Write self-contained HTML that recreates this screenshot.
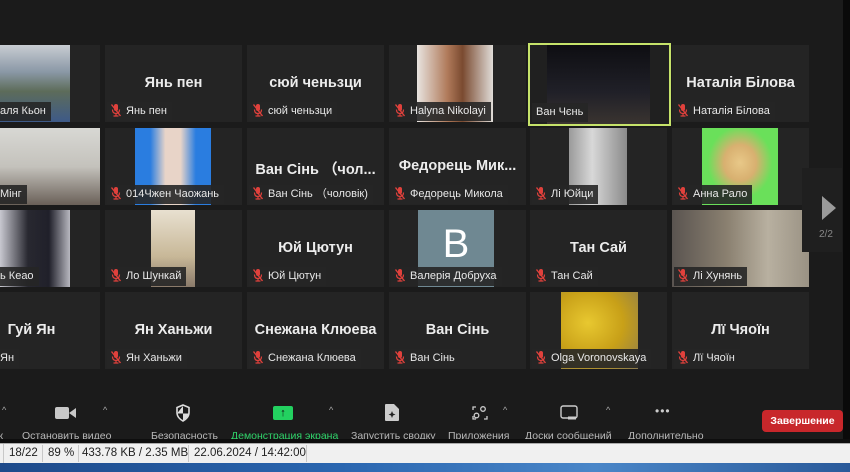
<!DOCTYPE html>
<html><head><meta charset="utf-8"><style>
*{margin:0;padding:0;box-sizing:border-box}
body{width:850px;height:472px;overflow:hidden;background:#1b1b1b;font-family:"Liberation Sans","DejaVu Sans",sans-serif;position:relative}
.t{position:absolute;width:137px;height:77px;background:#242424;overflow:hidden}
.ph{position:absolute;top:0;height:77px}
.nm{position:absolute;left:0;right:0;top:30px;text-align:center;color:#ececec;font-weight:bold;font-size:14.5px;white-space:nowrap}
.lb{position:absolute;left:2px;bottom:1px;height:19px;background:rgba(38,38,38,.9);color:#e8e8e8;font-size:11px;line-height:19px;padding:0 5px 0 3px;white-space:nowrap}
.lb svg{vertical-align:-3px;margin-right:4px}
.tb{position:absolute;color:#b8b8b8;font-size:10.5px;top:430px;white-space:nowrap}
.car{position:absolute;color:#aaa;font-size:9px;top:405px}
</style></head><body>
<svg width="0" height="0" style="position:absolute"><defs><symbol id="m" viewBox="0 0 12 14"><rect x="4" y="1" width="4" height="7" rx="2" fill="#e0413c"/><path d="M2.5 6.5q0 4 3.5 4t3.5-4M6 10.5v2.5M3.5 13h5" stroke="#e0413c" fill="none" stroke-width="1.2"/><path d="M1.5 1.5L10.5 13" stroke="#e0413c" stroke-width="1.4"/></symbol></defs></svg>

<!-- row 0 -->
<div class="t" style="left:-37px;top:45px"><div class="ph" style="left:37px;width:70px;background:linear-gradient(#c8ccd2 0,#8a98a6 35%,#5d6c5a 60%,#3e5a88 100%)"></div><div class="lb" style="left:37px;padding-left:0">аля Кьон</div></div>
<div class="t" style="left:105px;top:45px"><div class="nm">Янь пен</div><div class="lb"><svg width="12" height="14"><use href="#m"/></svg>Янь пен</div></div>
<div class="t" style="left:247px;top:45px"><div class="nm">сюй ченьзци</div><div class="lb"><svg width="12" height="14"><use href="#m"/></svg>сюй ченьзци</div></div>
<div class="t" style="left:389px;top:45px"><div class="ph" style="left:28px;width:76px;background:linear-gradient(90deg,#e8e4e0,#b07a5a 40%,#7a4a30 60%,#e0dcd8)"></div><div class="lb"><svg width="12" height="14"><use href="#m"/></svg>Halyna Nikolayi</div></div>
<div style="position:absolute;left:528px;top:43px;width:143px;height:83px;border:2px solid #c6e36a;background:#202020"><div style="position:absolute;left:17px;top:0;width:103px;height:79px;background:linear-gradient(#0e0e12,#202028 60%,#3a3430)"></div><div class="lb" style="left:2px;bottom:2px;padding-left:4px">Ван Чєнь</div></div>
<div class="t" style="left:672px;top:45px"><div class="nm">Наталія Білова</div><div class="lb"><svg width="12" height="14"><use href="#m"/></svg>Наталія Білова</div></div>
<!-- row 1 -->
<div class="t" style="left:-37px;top:128px"><div class="ph" style="left:37px;width:100px;background:linear-gradient(#d8d8d4,#c4c2bc 50%,#6a6058)"></div><div class="lb" style="left:37px;padding-left:0">Мінг</div></div>
<div class="t" style="left:105px;top:128px"><div class="ph" style="left:30px;width:76px;background:linear-gradient(90deg,#2a7de0,#2a7de0 20%,#e8d4c8 40%,#e8d4c8 60%,#2a7de0 80%)"></div><div class="lb"><svg width="12" height="14"><use href="#m"/></svg>014Чжен Чаожань</div></div>
<div class="t" style="left:247px;top:128px"><div class="nm">Ван Сінь （чол...</div><div class="lb"><svg width="12" height="14"><use href="#m"/></svg>Ван Сінь （чоловік)</div></div>
<div class="t" style="left:389px;top:128px"><div class="nm">Федорець Мик...</div><div class="lb"><svg width="12" height="14"><use href="#m"/></svg>Федорець Микола</div></div>
<div class="t" style="left:530px;top:128px"><div class="ph" style="left:39px;width:58px;background:linear-gradient(90deg,#9a9a9a,#d8d8d8 40%,#8a8a8a)"></div><div class="lb"><svg width="12" height="14"><use href="#m"/></svg>Лі Юйци</div></div>
<div class="t" style="left:672px;top:128px"><div class="ph" style="left:30px;width:76px;background:radial-gradient(ellipse at 50% 45%,#e8c888 0,#d8b070 30%,#6ae05a 60%)"></div><div class="lb"><svg width="12" height="14"><use href="#m"/></svg>Анна Рало</div></div>
<!-- row 2 -->
<div class="t" style="left:-37px;top:210px"><div class="ph" style="left:37px;width:70px;background:linear-gradient(90deg,#c8c8d0,#282830 40%,#20202a 70%,#b8b8c0)"></div><div class="lb" style="left:37px;padding-left:0">ь Кеао</div></div>
<div class="t" style="left:105px;top:210px"><div class="ph" style="left:46px;width:44px;background:linear-gradient(#e8e0d0,#c8b898 60%,#8a7a6a)"></div><div class="lb"><svg width="12" height="14"><use href="#m"/></svg>Ло Шункай</div></div>
<div class="t" style="left:247px;top:210px"><div class="nm">Юй Цютун</div><div class="lb"><svg width="12" height="14"><use href="#m"/></svg>Юй Цютун</div></div>
<div class="t" style="left:389px;top:210px"><div class="ph" style="left:29px;width:76px;background:#6f8892;color:#fff;font-size:40px;text-align:center;line-height:68px">B</div><div class="lb"><svg width="12" height="14"><use href="#m"/></svg>Валерія Добруха</div></div>
<div class="t" style="left:530px;top:210px"><div class="nm">Тан Сай</div><div class="lb"><svg width="12" height="14"><use href="#m"/></svg>Тан Сай</div></div>
<div class="t" style="left:672px;top:210px"><div class="ph" style="left:0;width:137px;background:linear-gradient(90deg,#5a5450,#8a8070 40%,#b8b0a0 70%,#9a9284)"></div><div class="lb"><svg width="12" height="14"><use href="#m"/></svg>Лі Хунянь</div></div>
<!-- row 3 -->
<div class="t" style="left:-37px;top:292px"><div class="nm">Гуй Ян</div><div class="lb" style="left:37px;padding-left:0">Ян</div></div>
<div class="t" style="left:105px;top:292px"><div class="nm">Ян Ханьжи</div><div class="lb"><svg width="12" height="14"><use href="#m"/></svg>Ян Ханьжи</div></div>
<div class="t" style="left:247px;top:292px"><div class="nm">Снежана Клюева</div><div class="lb"><svg width="12" height="14"><use href="#m"/></svg>Снежана Клюева</div></div>
<div class="t" style="left:389px;top:292px"><div class="nm">Ван Сінь</div><div class="lb"><svg width="12" height="14"><use href="#m"/></svg>Ван Сінь</div></div>
<div class="t" style="left:530px;top:292px"><div class="ph" style="left:31px;width:77px;background:radial-gradient(ellipse at 35% 40%,#e8c830 0,#c8a018 50%,#8a7a50 100%)"></div><div class="lb"><svg width="12" height="14"><use href="#m"/></svg>Olga Voronovskaya</div></div>
<div class="t" style="left:672px;top:292px"><div class="nm">Лї Чяоїн</div><div class="lb"><svg width="12" height="14"><use href="#m"/></svg>Лї Чяоїн</div></div>

<!-- page arrow -->
<div style="position:absolute;left:802px;top:168px;width:40px;height:84px;background:#1f1f1f"></div>
<div style="position:absolute;left:822px;top:196px;width:0;height:0;border-left:14px solid #9a9a9a;border-top:12px solid transparent;border-bottom:12px solid transparent"></div>
<div style="position:absolute;left:819px;top:229px;color:#888;font-size:10px">2/2</div>
<div style="position:absolute;left:843px;top:0;width:7px;height:442px;background:#0a0a0a"></div>

<!-- toolbar -->
<div class="car" style="left:2px">^</div>
<div class="tb" style="left:-4px">ж</div>
<div style="position:absolute;left:55px;top:407px;width:14px;height:12px;background:#c8c8c8;border-radius:2px"></div>
<div style="position:absolute;left:69px;top:408px;width:0;height:0;border-right:7px solid #c8c8c8;border-top:5px solid transparent;border-bottom:5px solid transparent"></div>
<div class="car" style="left:103px">^</div>
<div class="tb" style="left:22px">Остановить видео</div>
<svg style="position:absolute;left:175px;top:404px" width="16" height="18" viewBox="0 0 16 18"><path d="M8 1L2 3.5v5c0 4 3 7 6 8.5 3-1.5 6-4.5 6-8.5v-5z" fill="none" stroke="#ddd" stroke-width="1.6"/><path d="M8 2v7.5H2.8v-1 M8 9.5h5.2C13 13 10.5 15 8 16.3z" fill="#ddd"/></svg>
<div class="tb" style="left:151px">Безопасность</div>
<div style="position:absolute;left:273px;top:406px;width:20px;height:14px;background:#23d160;border-radius:2px;color:#111;font-size:11px;text-align:center;line-height:14px;font-weight:bold">↑</div>
<div class="car" style="left:329px">^</div>
<div class="tb" style="left:231px;color:#2fd46a">Демонстрация экрана</div>
<svg style="position:absolute;left:384px;top:403px" width="16" height="19" viewBox="0 0 16 19"><path d="M1 2a1 1 0 0 1 1-1h8l5 5v11a1 1 0 0 1-1 1H2a1 1 0 0 1-1-1z" fill="#ccc"/><path d="M8 8l1 2.5 2.5 1-2.5 1L8 15l-1-2.5-2.5-1 2.5-1z" fill="#222"/></svg>
<div class="tb" style="left:351px">Запустить сводку</div>
<svg style="position:absolute;left:472px;top:405px" width="16" height="16" viewBox="0 0 16 16" fill="none" stroke="#ccc" stroke-width="1.3"><path d="M1 5V2h3M15 11v3h-3M1 11v3h3"/><circle cx="11" cy="4" r="2.3"/><circle cx="4.5" cy="10.5" r="2.3"/></svg>
<div class="car" style="left:503px">^</div>
<div class="tb" style="left:448px">Приложения</div>
<svg style="position:absolute;left:560px;top:405px" width="18" height="16" viewBox="0 0 18 16" fill="none" stroke="#ccc" stroke-width="1.4"><rect x="1" y="1" width="16" height="12" rx="2"/><path d="M8 13h8" stroke-width="3"/></svg>
<div class="car" style="left:606px">^</div>
<div class="tb" style="left:525px">Доски сообщений</div>
<div style="position:absolute;left:655px;top:404px;color:#ccc;font-size:12px;letter-spacing:1px">•••</div>
<div class="tb" style="left:628px">Дополнительно</div>
<div style="position:absolute;left:762px;top:410px;width:81px;height:22px;background:#c8272b;border-radius:4px;color:#fff;font-size:10.5px;font-weight:bold;text-align:center;line-height:22px">Завершение</div>
<div style="position:absolute;left:0;top:439px;width:850px;height:4px;background:#0e0e0e"></div>

<!-- status bar -->
<div style="position:absolute;left:0;top:443px;width:850px;height:20px;background:#f0f0f0;border-top:1px solid #aaa;font-size:11.5px;color:#222;line-height:19px">
<span style="position:absolute;left:0;top:0;width:4px;height:19px;border-right:1px solid #c8c8c8"></span>
<span style="position:absolute;left:9px">18/22</span><span style="position:absolute;left:42px;top:1px;height:17px;border-left:1px solid #c8c8c8"></span>
<span style="position:absolute;left:48px">89 %</span><span style="position:absolute;left:78px;top:1px;height:17px;border-left:1px solid #c8c8c8"></span>
<span style="position:absolute;left:82px">433.78 KB / 2.35 MB</span><span style="position:absolute;left:188px;top:1px;height:17px;border-left:1px solid #c8c8c8"></span>
<span style="position:absolute;left:194px">22.06.2024 / 14:42:00</span><span style="position:absolute;left:306px;top:1px;height:17px;border-left:1px solid #c8c8c8"></span>
</div>
<div style="position:absolute;left:0;top:463px;width:850px;height:9px;background:linear-gradient(90deg,#1e4a8a,#2a66b0 40%,#4a86c8 70%,#2a5a9a)"></div>
</body></html>
